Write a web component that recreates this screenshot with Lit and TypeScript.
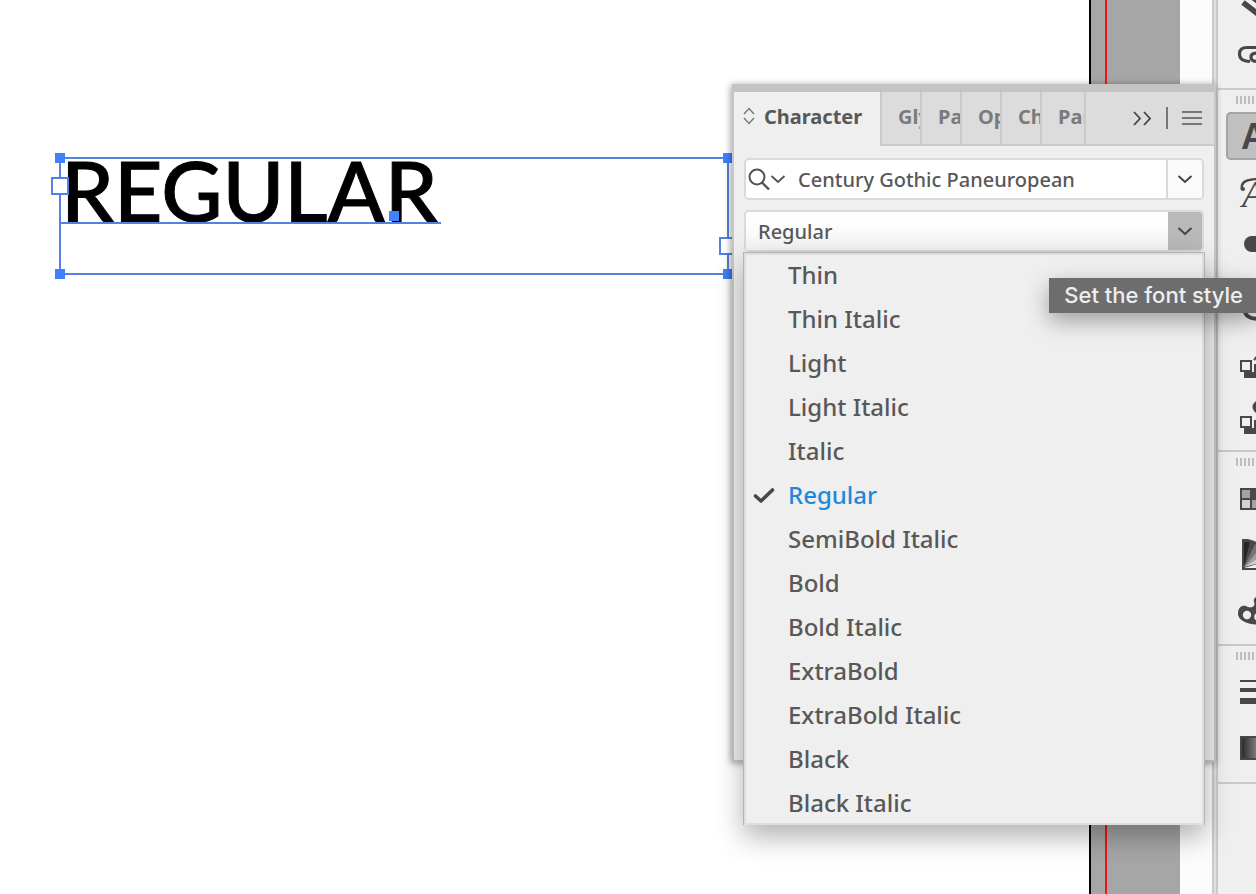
import { LitElement, html, css, svg } from "lit";
import { customElement, property, state } from "lit/decorators.js";
import { classMap } from "lit/directives/class-map.js";

const STYLES = [
  "Thin", "Thin Italic", "Light", "Light Italic", "Italic", "Regular",
  "SemiBold Italic", "Bold", "Bold Italic", "ExtraBold", "ExtraBold Italic",
  "Black", "Black Italic",
];

const chevron = html`<svg class="chevron" viewBox="0 0 16 10" width="16" height="10" aria-hidden="true">
  <path d="M1.5 2 L8 8 L14.5 2" fill="none" stroke="currentColor" stroke-width="2" />
</svg>`;

/** Text frame with its handles and ports, drawn on the page. */
@customElement("text-frame")
export class TextFrame extends LitElement {
  static styles = css`
    :host { display: block; position: absolute; left: 59px; top: 157px; width: 670px; height: 118px;
      box-sizing: border-box; border: 2px solid #5282de; }
    .copy { position: absolute; left: 0; top: -3px; font: 500 84px/68px Lato, "Open Sans", sans-serif;
      color: #000; -webkit-text-stroke: 1px #000; white-space: nowrap; margin: 0; }
    .baseline { position: absolute; left: 0; top: 63px; width: 380px; height: 2px; background: #5282de; }
    .handle { position: absolute; width: 10px; height: 10px; background: #3f82fb; }
    .tl { left: -6px; top: -6px; }
    .tr { right: -6px; top: -6px; }
    .bl { left: -6px; bottom: -6px; }
    .br { right: -6px; bottom: -6px; }
    .anchor { left: 328px; top: 52px; }
    .port { position: absolute; box-sizing: border-box; width: 18px; height: 18px; background: #fff;
      border: 2px solid #5282de; }
    .in { left: -10px; top: 18px; }
    .out { right: -10px; bottom: 18px; }
  `;
  render() {
    return html`
      <p class="copy">REGULAR</p>
      <div class="baseline"></div>
      <div class="handle anchor"></div>
      <div class="handle tl"></div><div class="handle tr"></div>
      <div class="handle bl"></div><div class="handle br"></div>
      <div class="port in"></div><div class="port out"></div>
    `;
  }
}

/** Floating Character panel with its open style menu. */
@customElement("character-panel")
export class CharacterPanel extends LitElement {
  @property() family = "Century Gothic Paneuropean";
  @state() private selected = "Regular";

  static styles = css`
    :host { display: block; box-sizing: border-box; height: 678px; background: #efefef;
      border: 2px solid #c6c6c6; border-top: 8px solid #c4c4c4;
      box-shadow: -1px 1px 7px rgba(0, 0, 0, 0.4); color: #585858;
      font-family: "Noto Sans", "Open Sans", sans-serif; font-size: 20px; font-weight: 500; }
    button, input, select { font: inherit; color: inherit; margin: 0; padding: 0; border: 0;
      background: none; border-radius: 0; outline: 0; }
    .tabs { display: flex; height: 54px; }
    .tab { box-sizing: border-box; width: 40px; overflow: hidden; white-space: nowrap; text-align: left;
      padding: 0 0 4px 16px; font-weight: 700; color: #7b7b7b; background: #dcdcdc;
      border-right: 2px solid #cacaca; border-bottom: 2px solid #cacaca; }
    .tab.wide { width: 44px; }
    .tab.active { display: flex; align-items: center; gap: 9px; width: 148px; padding: 0 0 6px 9px;
      color: #585858; background: #efefef; border-bottom: 0; }
    .tools { flex: 1; display: flex; align-items: center; justify-content: flex-end; gap: 14px;
      padding-right: 12px; background: #dcdcdc; border-bottom: 2px solid #cacaca; }
    .tools button { display: flex; }
    .rule { width: 2px; height: 22px; background: #777; }
    .body { display: flex; flex-direction: column; gap: 10px; padding: 12px 10px 0; }
    .field { position: relative; display: flex; align-items: center; box-sizing: border-box; height: 42px;
      background: #fff; border: 2px solid #dadada; border-radius: 5px; }
    .search { display: flex; align-items: center; gap: 0; padding-left: 2px; }
    .field input { flex: 1; min-width: 0; padding-left: 12px; }
    .field select { flex: 1; align-self: stretch; min-width: 0; padding-left: 12px; appearance: none;
      background: linear-gradient(#fff 20%, #f3f3f3); border-radius: 3px; }
    .arrow { display: flex; align-items: center; justify-content: center; align-self: stretch;
      box-sizing: border-box; width: 36px; color: #444; }
    button.arrow { border-left: 2px solid #dadada; background: #fafafa; border-radius: 0 3px 3px 0; }
    .arrow.pressed { position: absolute; right: 0; top: 0; bottom: 0; pointer-events: none;
      width: 34px; background: #b9b9b9; border-radius: 0 3px 3px 0; }
    .menu { position: absolute; left: -3px; right: -3px; top: 40px; z-index: 1; margin: 0; padding: 0;
      list-style: none; background: #efefef; border: 1px solid #b4b4b4; border-bottom: 0;
      box-shadow: inset 0 0 0 2px #dedede, 0 12px 26px rgba(0, 0, 0, 0.3); font-size: 24px; }
    .option { display: flex; align-items: center; width: 100%; height: 44px; text-align: left; }
    .mark { display: flex; width: 44px; padding-left: 9px; box-sizing: border-box; color: #484848; }
    .option.selected .name { color: #1e88dc; }
    .name { line-height: 32px; }
    .hidden { position: absolute; width: 1px; height: 1px; overflow: hidden; clip-path: inset(50%); }
  `;

  render() {
    return html`
      <div class="tabs" role="tablist">
        <button class="tab active" role="tab" aria-selected="true">
          <svg width="12" height="18" viewBox="0 0 12 18" aria-hidden="true">
            <path d="M1 7 L6 1.5 L11 7 M1 11 L6 16.5 L11 11" fill="none" stroke="#777" stroke-width="1.4" />
          </svg>Character
        </button>
        <button class="tab" role="tab" aria-selected="false">Glyphs</button>
        <button class="tab" role="tab" aria-selected="false">Pages</button>
        <button class="tab" role="tab" aria-selected="false">OpenType</button>
        <button class="tab" role="tab" aria-selected="false">Character Styles</button>
        <button class="tab wide" role="tab" aria-selected="false">Paragraph</button>
        <div class="tools">
          <button aria-label="Collapse panel">
            <svg width="20" height="16" viewBox="0 0 20 16">
              <path d="M2 2 L8 8.5 L2 15 M12 2 L18 8.5 L12 15" fill="none" stroke="#444" stroke-width="1.8" />
            </svg>
          </button>
          <span class="rule"></span>
          <button aria-label="Panel menu">
            <svg width="20" height="14" viewBox="0 0 20 14">
              <path d="M0 1 H20 M0 7 H20 M0 13 H20" stroke="#777" stroke-width="2" />
            </svg>
          </button>
        </div>
      </div>
      <div class="body">
        <div class="field">
          <label class="hidden" for="family">Font family</label>
          <button class="search" aria-label="Search options">
            <svg width="22" height="24" viewBox="0 0 22 24" aria-hidden="true">
              <circle cx="9" cy="10" r="7.5" fill="none" stroke="#535353" stroke-width="2" />
              <path d="M14 15.5 L21 22.5" stroke="#535353" stroke-width="2.4" />
            </svg>
            <svg width="16" height="10" viewBox="0 0 16 10" aria-hidden="true">
              <path d="M1.5 2 L8 8 L14.5 2" fill="none" stroke="#535353" stroke-width="1.8" />
            </svg>
          </button>
          <input id="family" type="text" .value=${this.family} />
          <button class="arrow" aria-label="Show fonts">${chevron}</button>
        </div>
        <div class="field">
          <label class="hidden" for="style">Font style</label>
          <select id="style" .value=${this.selected}
            @change=${(e: Event) => (this.selected = (e.target as HTMLSelectElement).value)}>
            ${STYLES.map((s) => html`<option ?selected=${s === this.selected}>${s}</option>`)}
          </select>
          <span class="arrow pressed">${chevron}</span>
          <ul class="menu" role="listbox" aria-label="Font styles">
            ${STYLES.map((s) => html`<li role="none">
              <button role="option" aria-selected=${s === this.selected ? "true" : "false"}
                class=${classMap({ option: true, selected: s === this.selected })}
                @click=${() => (this.selected = s)}>
                <span class="mark">${s === this.selected
                  ? html`<svg width="22" height="18" viewBox="0 0 22 18" aria-hidden="true">
                      <path d="M2.5 10 L8 15 L19.5 4" fill="none" stroke="currentColor" stroke-width="3.6"
                        stroke-linecap="round" stroke-linejoin="round" />
                    </svg>`
                  : ""}</span><span class="name">${s}</span>
              </button>
            </li>`)}
          </ul>
        </div>
      </div>
    `;
  }
}

/* Outlined square in front of a solid one. */
const stack = svg`<path d="M28 28 H48 V42 H18 V36 H28 Z" fill="#484848" />
  <rect x="15" y="25" width="10" height="10" fill="#efefef" stroke="#484848" stroke-width="2" />`;

const DOCK = [
  {
    cut: true,
    tools: [
      { name: "Effects", art: svg`<path d="M17 28.5 L36 43 M25 22 L38 32" stroke="#484848" stroke-width="5.5" fill="none" />` },
      {
        name: "Links",
        art: svg`<path d="M34 17.5 H21 C16 17.5 13.5 20 13.5 24 C13.5 28.5 16 31 24 31.5 M34 23 H31 C27 23 25 24.5 25 27 C25 30 27 31.5 31 31.5" fill="none" stroke="#484848" stroke-width="3.2" />`,
      },
    ],
  },
  {
    tools: [
      { name: "Character", on: true, art: svg`<text class="sans" x="15" y="37">A</text>` },
      {
        name: "Glyphs",
        art: svg`<path d="M16 22 C14 13 22 11 34 11" fill="none" stroke="#484848" stroke-width="2.4" />
          <circle cx="17" cy="21" r="2" fill="#484848" /><text class="serif" x="16" y="39">A</text>`,
      },
      { name: "Text Wrap", art: svg`<rect x="18" y="12" width="40" height="16" rx="8" fill="#484848" />` },
      { name: "Stroke Styles", art: svg`<path d="M18 26 C18 36 23 39 34 39" fill="none" stroke="#484848" stroke-width="4" />` },
      { name: "Object Styles", art: svg`${stack}<path d="M28 24 L33 18" stroke="#484848" stroke-width="2" />` },
      {
        name: "Align",
        art: svg`<circle cx="33" cy="15" r="6.5" fill="#484848" />${stack}`,
      },
    ],
  },
  {
    tools: [
      {
        name: "Swatches",
        art: svg`<rect x="14" y="14" width="34" height="22" fill="#484848" /><rect x="16" y="16" width="8" height="8" fill="#a3a3a3" />
          <rect x="16" y="26" width="8" height="8" fill="#d2d2d2" /><rect x="26" y="26" width="8" height="8" fill="#a3a3a3" />`,
      },
      {
        name: "Color Themes",
        art: svg`<path d="M16 9 H22 C30 11 36 14 42 20 V40 H16 Z" fill="#484848" />
          <path d="M18 12 H24 L18 37 Z" fill="#252525" /><path d="M24 12 L29 14 L18 37 Z" fill="#4a4a4a" />
          <path d="M29 14 L34 18 L18 37 Z" fill="#747474" /><path d="M34 18 L38 24 L18 37 Z" fill="#a0a0a0" />
          <path d="M38 24 L42 31 L18 37 Z" fill="#d0d0d0" /><path d="M42 31 V38 H18 Z" fill="#f2f2f2" />`,
      },
      {
        name: "Color",
        art: svg`<path d="M12 28 C12 21 16 19 20 20 C25 23 30 21 28 16 C27 12 30 10 36 10 V38 C24 40 12 35 12 28 Z" fill="#484848" />
          <circle cx="21" cy="29" r="4.2" fill="#efefef" /><circle cx="32" cy="31" r="3.8" fill="#efefef" />`,
      },
    ],
  },
  {
    tools: [
      {
        name: "Stroke",
        art: svg`<path d="M14 12 h34 v2 h-34 Z M14 20 h34 v4 h-34 Z M14 30 h34 v6 h-34 Z" fill="#484848" />`,
      },
      {
        name: "Gradient",
        art: svg`<defs><linearGradient id="ramp"><stop offset="0" stop-color="#262626" /><stop offset="1" stop-color="#e8e8e8" /></linearGradient></defs>
          <rect x="15" y="13" width="34" height="22" fill="url(#ramp)" stroke="#484848" stroke-width="2" />`,
      },
    ],
  },
];

/** Column of collapsed panel icons at the window's edge. */
@customElement("icon-dock")
export class IconDock extends LitElement {
  static styles = css`
    :host { display: block; overflow: hidden; background: #efefef; border-left: 2px solid #cacaca; }
    .group { display: flex; flex-direction: column; gap: 8px; padding: 6px 0 10px 8px;
      border-bottom: 2px solid #cacaca; }
    .group.cut { margin-top: -26px; padding-top: 0; }
    .grip { height: 8px; width: 40px; margin-left: 10px;
      background: repeating-linear-gradient(90deg, #bdbdbd 0 2px, transparent 2px 4px); }
    .tool { display: block; box-sizing: border-box; width: 48px; height: 48px; padding: 0; border: 0;
      background: none; border-radius: 5px; }
    .tool.on { background: #c0c0c0; box-shadow: inset 0 0 0 2px #a4a4a4; }
    .art { display: block; }
    .sans { font: 700 36px "Liberation Sans", sans-serif; fill: #484848; }
    .serif { font: italic 38px "Liberation Serif", serif; fill: #484848; }
  `;
  render() {
    return DOCK.map((g) => html`
      <div class=${classMap({ group: true, cut: !!(g as any).cut })}>
        ${(g as any).cut ? "" : html`<div class="grip"></div>`}
        ${g.tools.map((t) => html`<button class=${classMap({ tool: true, on: !!(t as any).on })} aria-label=${t.name}>
          <svg class="art" width="48" height="48" viewBox="0 0 48 48" aria-hidden="true">${t.art}</svg>
        </button>`)}
      </div>`);
  }
}

@customElement("app-root")
export class AppRoot extends LitElement {
  static styles = css`
    :host { display: flex; position: relative; min-height: 100vh; overflow: hidden; background: #fff; }
    .page { flex: 1; border-right: 2px solid #000; }
    .pasteboard { width: 89px; background: #a6a6a6; }
    .guide { width: 2px; height: 100%; margin-left: 14px; background: #f01414; }
    .track { width: 32px; background: #fcfcfc; border-right: 2px solid #cacaca; }
    .edge { width: 2px; background: #dedede; }
    .dock { width: 38px; }
    .panel { position: absolute; top: 84px; right: 40px; width: 484px; }
    .tip { position: absolute; z-index: 2; top: 278px; right: 0; padding: 0 13px 0 15px; background: #6d6d6d;
      color: #eee; font: 500 22px/35px Inter, "Liberation Sans", sans-serif; white-space: nowrap;
      box-shadow: 0 8px 22px rgba(0, 0, 0, 0.34); }
  `;
  render() {
    return html`
      <div class="page"></div>
      <div class="pasteboard"><div class="guide"></div></div>
      <div class="track"></div>
      <div class="edge"></div>
      <icon-dock class="dock"></icon-dock>
      <text-frame></text-frame>
      <character-panel class="panel"></character-panel>
      <div class="tip" role="tooltip">Set the font style</div>
    `;
  }
}
